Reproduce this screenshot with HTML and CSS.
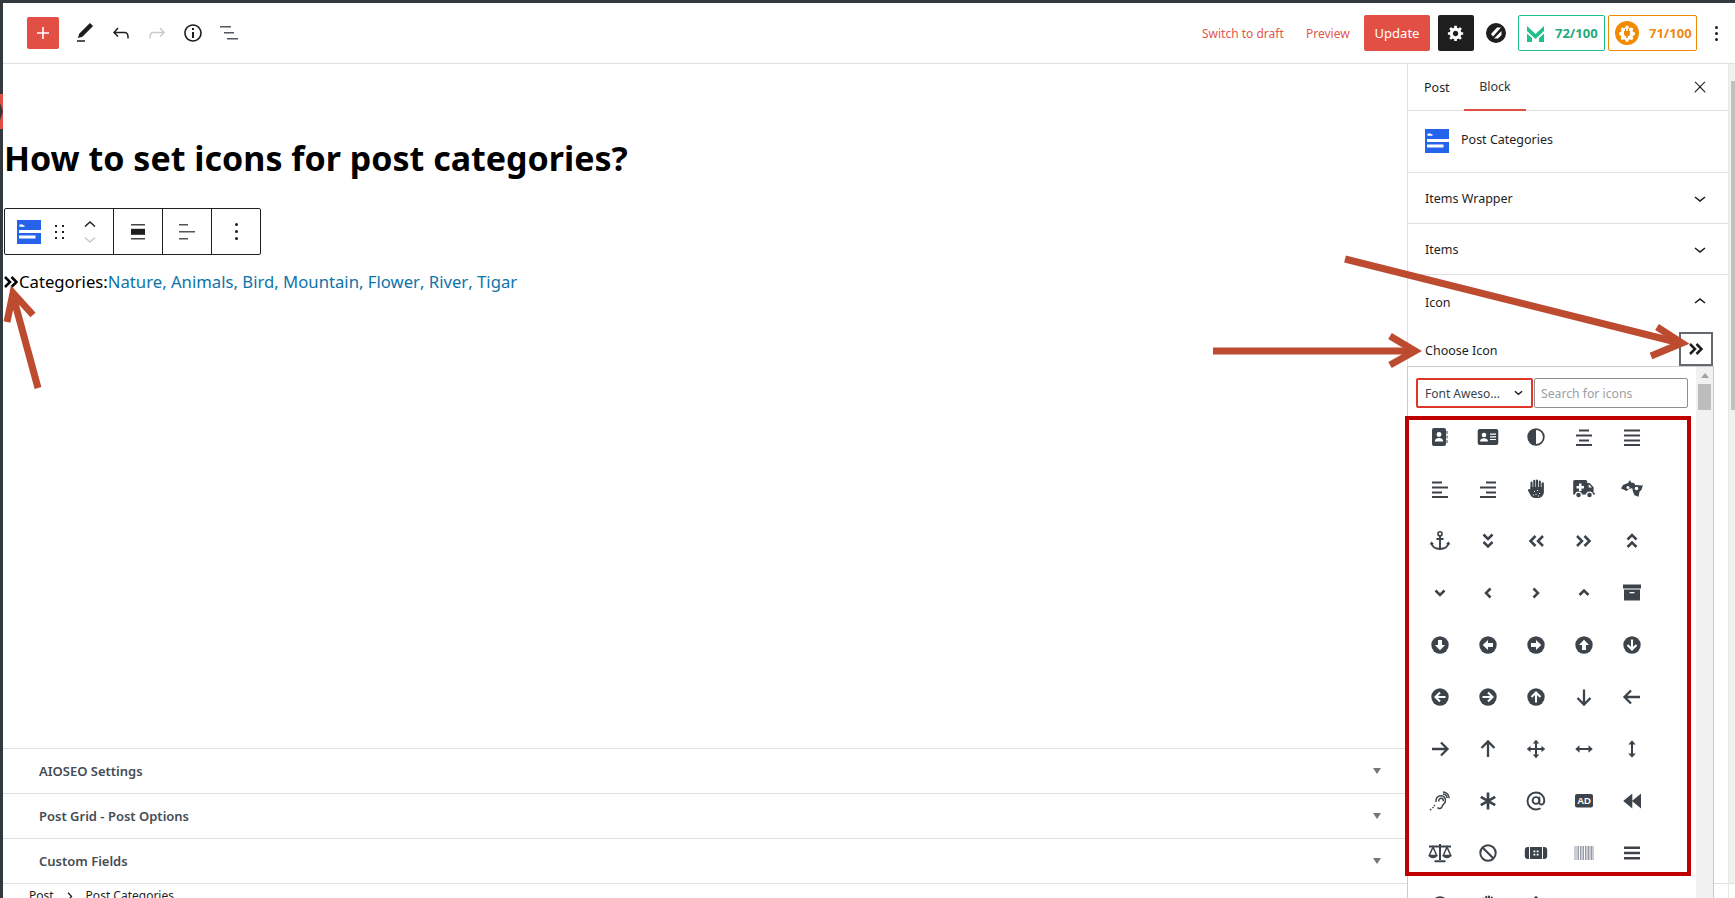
FILE: index.html
```html
<!DOCTYPE html>
<html lang="en">
  <head>
    <meta charset="UTF-8" />
    <title>Edit Post</title>
    <link rel="stylesheet" href="styles.css">
  </head>
  <body>
    <!-- icon sprite for the picker, 1 unit = 1px, box runs -2..22 -->
    <svg class="sprite" xmlns="http://www.w3.org/2000/svg">
      <symbol id="address-book" viewBox="-2 -2 24 24">
        <path d="M4 1h10a2 2 0 0 1 2 2v14a2 2 0 0 1-2 2H4a2 2 0 0 1-2-2V3a2 2 0 0 1 2-2z" />
        <path d="M16.500 4h1v3h-1zM16.500 8.500h1v3h-1zM16.500 13h1v3h-1z" />
        <circle cx="9" cy="7.500" r="2.400" fill="#fff" />
        <path d="M4.800 14.500c0-2.400 1.800-3.500 4.200-3.500s4.200 1.100 4.200 3.500z" fill="#fff" />
      </symbol>
      <symbol id="address-card" viewBox="-2 -2 24 24">
        <rect x="-.3" y="2" width="20.600" height="16" rx="2" />
        <circle cx="6" cy="8" r="2.300" fill="#fff" />
        <path d="M2 14.500c0-2.300 1.800-3.300 4-3.300s4 1 4 3.300z" fill="#fff" />
        <path d="M12 6.500h6v1.200h-6zM12 9.200h6v1.200h-6zM12 11.900h6v1.200h-6z" fill="#fff" />
      </symbol>
      <symbol id="adjust" viewBox="-2 -2 24 24">
        <circle cx="10" cy="10" r="7.800" fill="none" stroke="currentColor" stroke-width="1.800" />
        <path d="M10 2a8 8 0 0 0 0 16z" />
      </symbol>
      <symbol id="align-center" viewBox="-2 -2 24 24">
        <path d="M5 2.500h10v2H5zM2 7.500h16v2H2zM5 12.500h10v2H5zM2 17h16v2H2z" />
      </symbol>
      <symbol id="align-justify" viewBox="-2 -2 24 24">
        <path d="M2 2.500h16v2H2zM2 7.500h16v2H2zM2 12.500h16v2H2zM2 17h16v2H2z" />
      </symbol>
      <symbol id="align-left" viewBox="-2 -2 24 24">
        <path d="M2 2.500h10v2H2zM2 7.500h16v2H2zM2 12.500h10v2H2zM2 17h16v2H2z" />
      </symbol>
      <symbol id="align-right" viewBox="-2 -2 24 24">
        <path d="M8 2.500h10v2H8zM2 7.500h16v2H2zM8 12.500h10v2H8zM2 17h16v2H2z" />
      </symbol>
      <symbol id="allergies" viewBox="-2 -2 24 24">
        <path d="M5.500 3.500v8M8.300 1.800v8M11 1.500v8M13.800 2.500v8" fill="none" stroke="currentColor" stroke-width="2.100" stroke-linecap="round" />
        <path d="M4.500 8h11v-3.500a1.200 1.200 0 0 1 2.400 0V13c0 3.300-2.500 6-5.800 6H9c-2 0-3.400-1-4.300-2.500L2.200 12c-.8-1.500 1-2.700 2-1.500l.3.500z" />
        <path d="M8 12h1v1H8zM11 11h1v1h-1zM13 14h1v1h-1zM9.500 15h1v1h-1zM7 15.500h1v1H7zM12 16.500h1v1h-1z" fill="#fff" />
      </symbol>
      <symbol id="ambulance" viewBox="-2 -2 24 24">
        <path d="M-.8 2.500A1.500 1.500 0 0 1 .7 1h11a1.500 1.500 0 0 1 1.500 1.500V4h2.400l4 4.200v5.800h1.300v1.600H-.8z" />
        <path d="M14.700 5.700h.6l2.600 2.700h-3.200z" fill="#fff" />
        <path d="M5 4.500h2.500V7H10v2.500H7.500V12H5V9.500H2.500V7H5z" fill="#fff" />
        <circle cx="4.500" cy="16" r="2.900" stroke="#fff" stroke-width="1.300" />
        <circle cx="15.500" cy="16" r="2.900" stroke="#fff" stroke-width="1.300" />
      </symbol>
      <symbol id="sign-language" viewBox="-2 -2 24 24">
        <path d="M-1 9.500l2-3.500 5-2 2-3 1 2.500 3 .5 1.500 2.500-3 2.500-3.500 1-2.500 2-3-1.500z" />
        <path d="M10 8.500l3.500-2.500 6.500.5 1-.8-1.500 5-2 2-1 5-4-1.500-1.500-3.500z" />
        <circle cx="6" cy="8.500" r="1.500" fill="#fff" />
        <circle cx="14.500" cy="9.500" r="1.800" fill="#fff" />
      </symbol>
      <symbol id="anchor" viewBox="-2 -2 24 24">
        <circle cx="10" cy="2.800" r="2.100" fill="none" stroke="currentColor" stroke-width="1.600" />
        <path d="M10 5v13M6.500 8h7M1.500 12c.6 3.800 4.200 6 8.500 6s7.900-2.200 8.500-6" fill="none" stroke="currentColor" stroke-width="1.900" />
        <path d="M-.5 13.500l2-3 2.500 2.600zM20.500 13.500l-2-3-2.500 2.600z" />
      </symbol>
      <symbol id="angle-double-down" viewBox="-2 -2 24 24">
        <path d="M5.500 3.500L10 8l4.500-4.500M5.500 11L10 15.500l4.500-4.500" fill="none" stroke="currentColor" stroke-width="2.500" />
      </symbol>
      <symbol id="angle-double-left" viewBox="-2 -2 24 24">
        <path d="M9.500 5L4.500 10l5 5M17 5l-5 5 5 5" fill="none" stroke="currentColor" stroke-width="2.500" />
      </symbol>
      <symbol id="angle-double-right" viewBox="-2 -2 24 24">
        <path d="M3 5l5 5-5 5M10.500 5l5 5-5 5" fill="none" stroke="currentColor" stroke-width="2.500" />
      </symbol>
      <symbol id="angle-double-up" viewBox="-2 -2 24 24">
        <path d="M5.500 8.500L10 4l4.500 4.500M5.500 16L10 11.500l4.500 4.500" fill="none" stroke="currentColor" stroke-width="2.500" />
      </symbol>
      <symbol id="angle-down" viewBox="-2 -2 24 24">
        <path d="M5.500 7.500L10 12l4.500-4.500" fill="none" stroke="currentColor" stroke-width="2.500" />
      </symbol>
      <symbol id="angle-left" viewBox="-2 -2 24 24">
        <path d="M12.500 5.500L8 10l4.500 4.500" fill="none" stroke="currentColor" stroke-width="2.500" />
      </symbol>
      <symbol id="angle-right" viewBox="-2 -2 24 24">
        <path d="M7.500 5.500L12 10l-4.500 4.500" fill="none" stroke="currentColor" stroke-width="2.500" />
      </symbol>
      <symbol id="angle-up" viewBox="-2 -2 24 24">
        <path d="M5.500 12L10 7.500l4.500 4.500" fill="none" stroke="currentColor" stroke-width="2.500" />
      </symbol>
      <symbol id="archive" viewBox="-2 -2 24 24">
        <path d="M1 1.500h18v4H1zM2 6.500h16v11H2z" />
        <path d="M7.500 9h5v1.300h-5z" fill="#fff" />
      </symbol>
      <symbol id="alt-down" viewBox="-2 -2 24 24">
        <circle cx="10" cy="10" r="8.700" />
        <path d="M8 5h4v5h3l-5 5.300L5 10h3z" fill="#fff" />
      </symbol>
      <symbol id="alt-left" viewBox="-2 -2 24 24">
        <circle cx="10" cy="10" r="8.700" />
        <path d="M15 8v4h-5v3l-5.300-5L10 5v3z" fill="#fff" />
      </symbol>
      <symbol id="alt-right" viewBox="-2 -2 24 24">
        <circle cx="10" cy="10" r="8.700" />
        <path d="M5 8v4h5v3l5.300-5L10 5v3z" fill="#fff" />
      </symbol>
      <symbol id="alt-up" viewBox="-2 -2 24 24">
        <circle cx="10" cy="10" r="8.700" />
        <path d="M8 15h4v-5h3l-5-5.300L5 10h3z" fill="#fff" />
      </symbol>
      <symbol id="circle-down" viewBox="-2 -2 24 24">
        <circle cx="10" cy="10" r="8.700" />
        <path d="M10 4.500v10M5.500 10l4.500 4.500 4.500-4.500" fill="none" stroke="#fff" stroke-width="2.100" />
      </symbol>
      <symbol id="circle-left" viewBox="-2 -2 24 24">
        <circle cx="10" cy="10" r="8.700" />
        <path d="M15.500 10h-10M10 5.500L5.500 10l4.500 4.500" fill="none" stroke="#fff" stroke-width="2.100" />
      </symbol>
      <symbol id="circle-right" viewBox="-2 -2 24 24">
        <circle cx="10" cy="10" r="8.700" />
        <path d="M4.500 10h10M10 5.500l4.500 4.500-4.500 4.500" fill="none" stroke="#fff" stroke-width="2.100" />
      </symbol>
      <symbol id="circle-up" viewBox="-2 -2 24 24">
        <circle cx="10" cy="10" r="8.700" />
        <path d="M10 15.500v-10M5.500 10L10 5.500l4.500 4.500" fill="none" stroke="#fff" stroke-width="2.100" />
      </symbol>
      <symbol id="arrow-down" viewBox="-2 -2 24 24">
        <path d="M10 2.500v15M3.500 11l6.500 6.500 6.500-6.500" fill="none" stroke="currentColor" stroke-width="2.300" />
      </symbol>
      <symbol id="arrow-left" viewBox="-2 -2 24 24">
        <path d="M18 10H2.500M9 3.500L2.500 10 9 16.500" fill="none" stroke="currentColor" stroke-width="2.300" />
      </symbol>
      <symbol id="arrow-right" viewBox="-2 -2 24 24">
        <path d="M2 10h15.500M11 3.500l6.500 6.500-6.500 6.500" fill="none" stroke="currentColor" stroke-width="2.300" />
      </symbol>
      <symbol id="arrow-up" viewBox="-2 -2 24 24">
        <path d="M10 18V2.500M3.500 9L10 2.500 16.500 9" fill="none" stroke="currentColor" stroke-width="2.300" />
      </symbol>
      <symbol id="arrows-alt" viewBox="-2 -2 24 24">
        <path d="M10 3v14M3 10h14" stroke="currentColor" stroke-width="2" />
        <path d="M10 .8L13.300 4.500H6.700zM10 19.200L6.700 15.500h6.600zM.8 10l3.700-3.300v6.600zM19.200 10l-3.700 3.300V6.700z" />
      </symbol>
      <symbol id="arrows-h" viewBox="-2 -2 24 24">
        <path d="M4 10h12" stroke="currentColor" stroke-width="2" />
        <path d="M1.200 10L5.500 6.300v7.400zM18.800 10l-4.300 3.700V6.300z" />
      </symbol>
      <symbol id="arrows-v" viewBox="-2 -2 24 24">
        <path d="M10 4v12" stroke="currentColor" stroke-width="2" />
        <path d="M10 1.200l3.700 4.300H6.300zM10 18.800l-3.700-4.300h7.400z" />
      </symbol>
      <symbol id="listening" viewBox="-2 -2 24 24">
        <path d="M6 11c-.5-4 2-6.300 5-6.300s5.300 2.600 4.300 6c-.7 2.200-2.800 2.500-3.300 5-.5 2-3.300 2.300-4.500.8M8.800 10.500c-.3-2 1-3.300 2.400-3.300s2.500 1.300 2 3M13 1c3.300.2 6 2.800 6.200 6.200M13 3c2.300.2 4 2 4.200 4" fill="none" stroke="currentColor" stroke-width="1.500" />
        <path d="M4.500 13.500l1 1-1 1-1-1zM3 15.500l1 1-1 1-1-1zM.5 17.500l1.200 1.200-1 1-1.200-1.200z" />
      </symbol>
      <symbol id="asterisk" viewBox="-2 -2 24 24">
        <path d="M10 1.500v17M2.800 5.800l14.400 8.400M17.200 5.800L2.800 14.200" fill="none" stroke="currentColor" stroke-width="2.700" />
      </symbol>
      <symbol id="at" viewBox="-2 -2 24 24">
        <path d="M13.300 5.800v6c0 2.700 5 2.500 5-2.300 0-4.800-3.800-8-8.300-8a8.500 8.500 0 0 0 0 17c1.800 0 3.200-.4 4.500-1.300" fill="none" stroke="currentColor" stroke-width="1.900" />
        <circle cx="10" cy="9.500" r="3.400" fill="none" stroke="currentColor" stroke-width="1.900" />
      </symbol>
      <symbol id="ad" viewBox="-2 -2 24 24">
        <rect x="1" y="3" width="18" height="13.500" rx="2" />
        <text x="10" y="13.200" text-anchor="middle" class="ad-text">AD</text>
      </symbol>
      <symbol id="backward" viewBox="-2 -2 24 24">
        <path d="M10.300 2.500v15L1.200 10zM19 2.500v15L10 10z" />
      </symbol>
      <symbol id="balance-scale" viewBox="-2 -2 24 24">
        <path d="M10 1v16M4.500 18.200h11M-1 3.500h22" fill="none" stroke="currentColor" stroke-width="2" />
        <path d="M3 4L-.7 12.500h7.400zM17 4l-3.700 8.500h7.400z" fill="none" stroke="currentColor" stroke-width="1.500" />
        <path d="M-1.300 12h8.600c0 2-1.800 3.200-4.300 3.200S-1.300 14-1.300 12zM12.700 12h8.600c0 2-1.800 3.200-4.300 3.200S12.700 14 12.700 12z" />
      </symbol>
      <symbol id="ban" viewBox="-2 -2 24 24">
        <circle cx="10" cy="10" r="7.700" fill="none" stroke="currentColor" stroke-width="2" />
        <path d="M4.500 4.500l11 11" stroke="currentColor" stroke-width="2.100" />
      </symbol>
      <symbol id="band-aid" viewBox="-2 -2 24 24">
        <rect x="-1.200" y="4" width="22.400" height="12" rx="3" />
        <path d="M3 4h1v12H3zM16 4h1v12h-1z" fill="#fff" />
        <path d="M7.500 7.500H9.300v1.800H7.500zM10.700 7.500h1.800v1.800h-1.800zM7.500 10.700H9.300v1.800H7.500zM10.700 10.700h1.800v1.800h-1.800z" fill="#fff" />
      </symbol>
      <symbol id="barcode" viewBox="-2 -2 24 24">
        <path d="M1 3v14M3 3v14M4.500 3v14M6.500 3v14M8 3v14M9.500 3v14M11.500 3v14M13 3v14M14.500 3v14M16 3v14M17.500 3v14M19 3v14" stroke="currentColor" stroke-width=".8" />
      </symbol>
      <symbol id="bars" viewBox="-2 -2 24 24">
        <path d="M2 3.500h16v2.400H2zM2 8.800h16v2.400H2zM2 14.100h16v2.400H2z" />
      </symbol>
      <symbol id="double-right" viewBox="0 0 14 12">
        <path d="M1 1l5 5-5 5M7.500 1l5 5-5 5" fill="none" stroke="currentColor" stroke-width="2.500" />
      </symbol>
      <symbol id="block-icon" viewBox="0 0 24 24">
        <path d="M0 0h24v24H0z" fill="#2563eb" />
        <path d="M2.500 4.500h3l1 .8h1v1.500h-5zM2 10h22v3H2zM2 15.500h16.500v3H2z" fill="#fff" />
      </symbol>
      <symbol id="chev-down" viewBox="0 0 24 24">
        <path d="M17.500 11.600L12 16l-5.500-4.400.9-1.200L12 14l4.500-3.600 1 1.200z" />
      </symbol>
      <symbol id="chev-up" viewBox="0 0 24 24">
        <path d="M6.500 12.400L12 8l5.500 4.400-.9 1.200L12 10l-4.500 3.600-1-1.200z" />
      </symbol>
      <symbol id="caret" viewBox="0 0 8 6">
        <path d="M0 0h8L4 6z" />
      </symbol>
    </svg>

    <div class="page">
      <div class="marker"></div>

      <header class="topbar">
        <button class="btn-add">
          <svg viewBox="0 0 24 24" width="24" height="24"><path d="M18 11.200h-5.200V6h-1.600v5.200H6v1.600h5.200V18h1.600v-5.200H18z" /></svg>
        </button>
        <span class="tool">
          <svg viewBox="0 0 24 24" width="24" height="24"><path d="M20.100 5.100L16.900 2 6.200 12.700l-1.300 4.400 4.500-1.300L20.100 5.100zM4 20.800h8v-1.500H4v1.500z" /></svg>
        </span>
        <span class="tool">
          <svg viewBox="0 0 24 24" width="24" height="24"><path d="M18.300 11.700c-.6-.6-1.400-.9-2.300-.9H6.700l2.900-3.300-1.100-1-4.500 5L8.500 16l1-1-2.700-2.700H16c.5 0 .9.200 1.300.5 1 1 1 3.400 1 4.500v.3h1.500v-.2c0-1.500 0-4.300-1.500-5.700z" /></svg>
        </span>
        <span class="tool tool-off">
          <svg viewBox="0 0 24 24" width="24" height="24"><path d="M15.600 6.500l-1.100 1 2.900 3.300H8c-.9 0-1.700.3-2.300.9-1.400 1.500-1.400 4.200-1.400 5.600v.2h1.500v-.3c0-1.100 0-3.500 1-4.500.3-.3.7-.5 1.300-.5h9.200L14.500 15l1.100 1.100 4.600-4.600-4.600-5z" /></svg>
        </span>
        <span class="tool">
          <svg viewBox="0 0 24 24" width="24" height="24"><path d="M12 3.200c-4.800 0-8.800 3.900-8.800 8.800 0 4.800 3.900 8.800 8.800 8.800 4.800 0 8.800-3.900 8.800-8.800 0-4.800-4-8.800-8.800-8.800zm0 16c-4 0-7.200-3.300-7.200-7.200C4.800 8 8 4.800 12 4.800s7.200 3.300 7.200 7.200c0 4-3.200 7.200-7.200 7.200zM11 17h2v-6h-2v6zm0-8h2V7h-2v2z" /></svg>
        </span>
        <span class="tool">
          <svg viewBox="0 0 24 24" width="24" height="24"><path d="M3 5h11v1.500H3zM7 11h10v1.500H7zM10 17h11v1.500H10z" fill="#50575e" /></svg>
        </span>

        <div class="topbar-right">
          <a class="link-draft">Switch to draft</a>
          <a class="link-preview">Preview</a>
          <button class="btn-update">Update</button>
          <button class="btn-settings">
            <svg viewBox="0 0 20 20" width="18" height="18"><path d="M18 12h-2.180c-.17.7-.44 1.350-.81 1.930l1.540 1.540-2.100 2.100-1.540-1.540c-.58.36-1.230.63-1.910.79V19H8v-2.180c-.68-.16-1.330-.43-1.910-.79l-1.540 1.540-2.120-2.120 1.540-1.540c-.36-.58-.63-1.230-.79-1.910H1V9.030h2.170c.16-.7.44-1.350.8-1.940L2.430 5.550l2.100-2.100 1.540 1.540c.58-.37 1.240-.64 1.930-.81V2h3v2.180c.68.16 1.330.43 1.910.79l1.540-1.540 2.120 2.120-1.540 1.540c.36.59.64 1.240.8 1.940H18V12zm-8.500 1.500c1.660 0 3-1.340 3-3s-1.340-3-3-3-3 1.340-3 3 1.340 3 3 3z" /></svg>
          </button>
          <svg class="logo-z" viewBox="0 0 20 20" width="20" height="20">
            <circle cx="10" cy="10" r="10" fill="#1e1e1e" />
            <path d="M5 11L11 4.500h4L7 13.500zM15.500 8v4L12 15.500H8z" fill="#fff" />
          </svg>
          <div class="score score-green">
            <svg viewBox="0 0 17 17" width="17" height="17">
              <path d="M0 1l8.500 8L17 1v5l-8.500 8L0 6zM0 8.500l5 4.500v4H0zM12 13l5-4.500V17h-5z" fill="#1fc08e" />
            </svg>
            <span>72/100</span>
          </div>
          <div class="score score-orange">
            <svg viewBox="0 0 24 24" width="24" height="24">
              <circle cx="12" cy="12" r="12" fill="#f28a00" />
              <path d="M10.500 4.500h3l.5 2 1.800.8 1.800-1 2 2-1 1.800.8 1.800 2 .5v3l-2 .5-.8 1.800 1 1.800-2 2-1.800-1-1.800.8-.5 2h-3l-.5-2-1.800-.8-1.800 1-2-2 1-1.800-.8-1.800-2-.5v-3l2-.5.8-1.800-1-1.800 2-2 1.800 1 1.800-.8z" transform="translate(12 12) scale(.84) translate(-12 -13)" fill="#fff" />
              <path d="M10 7.500h1.200v2.500h1.600V7.500H14V10h1v3c0 1.200-1 2-2.200 2.200V17h-1.600v-1.800C10 15 9 14.200 9 13v-3h1z" fill="#f28a00" />
            </svg>
            <span>71/100</span>
          </div>
          <span class="kebab"><i></i><i></i><i></i></span>
        </div>
      </header>

      <main class="main">
        <section class="editor">
          <div class="canvas">
            <h1 class="post-title">How to set icons for post categories?</h1>

            <div class="block-bar">
              <div class="bar-group bar-first">
                <svg width="24" height="24"><use href="#block-icon" /></svg>
                <span class="drag"><i></i><i></i><i></i><i></i><i></i><i></i></span>
                <span class="movers">
                  <svg viewBox="0 0 14 8" width="14" height="8"><path d="M2 6.500L7 2l5 4.500" fill="none" stroke="#1e1e1e" stroke-width="1.500" /></svg>
                  <svg viewBox="0 0 14 8" width="14" height="8"><path d="M2 1.500L7 6l5-4.500" fill="none" stroke="#c8c8c8" stroke-width="1.500" /></svg>
                </span>
              </div>
              <div class="bar-group">
                <svg viewBox="0 0 14 16" width="14" height="16"><path d="M0 0h14v1.500H0zM0 14h14v1.500H0z" fill="#444" /><path d="M0 4.800h14v6H0z" fill="#1e1e1e" /></svg>
              </div>
              <div class="bar-group">
                <svg viewBox="0 0 16 16" width="16" height="16"><path d="M0 0h9v1.500H0zM0 7h16v1.500H0zM0 14h9v1.500H0z" fill="#555" /></svg>
              </div>
              <div class="bar-group">
                <span class="kebab kebab-small"><i></i><i></i><i></i></span>
              </div>
            </div>

            <p class="categories">
              <svg class="cat-icon" width="14" height="12"><use href="#double-right" /></svg><span>Categories:</span><a>Nature</a>, <a>Animals</a>, <a>Bird</a>, <a>Mountain</a>, <a>Flower</a>, <a>River</a>, <a>Tigar</a>
            </p>
          </div>

          <div class="meta-row">
            <span>AIOSEO Settings</span>
            <svg width="8" height="6"><use href="#caret" /></svg>
          </div>
          <div class="meta-row">
            <span>Post Grid - Post Options</span>
            <svg width="8" height="6"><use href="#caret" /></svg>
          </div>
          <div class="meta-row">
            <span>Custom Fields</span>
            <svg width="8" height="6"><use href="#caret" /></svg>
          </div>
          <div class="crumbs">
            <span>Post</span>
            <svg viewBox="0 0 8 12" width="6" height="9"><path d="M1.500 1l4.500 5-4.500 5" fill="none" stroke="#1e1e1e" stroke-width="1.800" /></svg>
            <span>Post Categories</span>
          </div>
        </section>

        <aside class="sidebar">
          <div class="tabs">
            <span class="tab">Post</span>
            <span class="tab tab-active">Block</span>
            <svg class="tabs-close" viewBox="0 0 24 24" width="18" height="18"><path d="M13 11.800l6.100-6.300-1-1-6.100 6.200-6.100-6.200-1 1 6.100 6.300-6.500 6.700 1 1 6.500-6.600 6.500 6.600 1-1z" /></svg>
          </div>
          <div class="block-card">
            <svg width="24" height="24"><use href="#block-icon" /></svg>
            <span>Post Categories</span>
          </div>
          <div class="panel-row">
            <span>Items Wrapper</span>
            <svg width="24" height="24"><use href="#chev-down" /></svg>
          </div>
          <div class="panel-row">
            <span>Items</span>
            <svg width="24" height="24"><use href="#chev-down" /></svg>
          </div>
          <div class="panel-open">
            <div class="panel-head">
              <span>Icon</span>
              <svg width="24" height="24"><use href="#chev-up" /></svg>
            </div>
            <div class="choose-row">
              <span class="choose-label">Choose Icon</span>
              <span class="swatch"><svg width="14" height="12"><use href="#double-right" /></svg></span>
            </div>
            <div class="picker">
              <div class="picker-body">
                <div class="picker-search">
                  <div class="fake-select">
                    <span>Font Aweso...</span>
                    <svg viewBox="0 0 10 6" width="9" height="6"><path d="M1 1l4 3.500L9 1" fill="none" stroke="#1e1e1e" stroke-width="1.500" /></svg>
                  </div>
                  <input class="icon-search" type="text" placeholder="Search for icons" />
                </div>
                <div class="icon-grid">
                  <svg class="ico"><use href="#address-book" /></svg>
                  <svg class="ico"><use href="#address-card" /></svg>
                  <svg class="ico"><use href="#adjust" /></svg>
                  <svg class="ico"><use href="#align-center" /></svg>
                  <svg class="ico"><use href="#align-justify" /></svg>

                  <svg class="ico"><use href="#align-left" /></svg>
                  <svg class="ico"><use href="#align-right" /></svg>
                  <svg class="ico"><use href="#allergies" /></svg>
                  <svg class="ico"><use href="#ambulance" /></svg>
                  <svg class="ico"><use href="#sign-language" /></svg>

                  <svg class="ico"><use href="#anchor" /></svg>
                  <svg class="ico"><use href="#angle-double-down" /></svg>
                  <svg class="ico"><use href="#angle-double-left" /></svg>
                  <svg class="ico"><use href="#angle-double-right" /></svg>
                  <svg class="ico"><use href="#angle-double-up" /></svg>

                  <svg class="ico"><use href="#angle-down" /></svg>
                  <svg class="ico"><use href="#angle-left" /></svg>
                  <svg class="ico"><use href="#angle-right" /></svg>
                  <svg class="ico"><use href="#angle-up" /></svg>
                  <svg class="ico"><use href="#archive" /></svg>

                  <svg class="ico"><use href="#alt-down" /></svg>
                  <svg class="ico"><use href="#alt-left" /></svg>
                  <svg class="ico"><use href="#alt-right" /></svg>
                  <svg class="ico"><use href="#alt-up" /></svg>
                  <svg class="ico"><use href="#circle-down" /></svg>

                  <svg class="ico"><use href="#circle-left" /></svg>
                  <svg class="ico"><use href="#circle-right" /></svg>
                  <svg class="ico"><use href="#circle-up" /></svg>
                  <svg class="ico"><use href="#arrow-down" /></svg>
                  <svg class="ico"><use href="#arrow-left" /></svg>

                  <svg class="ico"><use href="#arrow-right" /></svg>
                  <svg class="ico"><use href="#arrow-up" /></svg>
                  <svg class="ico"><use href="#arrows-alt" /></svg>
                  <svg class="ico"><use href="#arrows-h" /></svg>
                  <svg class="ico"><use href="#arrows-v" /></svg>

                  <svg class="ico"><use href="#listening" /></svg>
                  <svg class="ico"><use href="#asterisk" /></svg>
                  <svg class="ico"><use href="#at" /></svg>
                  <svg class="ico"><use href="#ad" /></svg>
                  <svg class="ico"><use href="#backward" /></svg>

                  <svg class="ico"><use href="#balance-scale" /></svg>
                  <svg class="ico"><use href="#ban" /></svg>
                  <svg class="ico"><use href="#band-aid" /></svg>
                  <svg class="ico ico-thin"><use href="#barcode" /></svg>
                  <svg class="ico"><use href="#bars" /></svg>

                  <svg class="ico"><use href="#circle-down" /></svg>
                  <svg class="ico"><use href="#allergies" /></svg>
                  <svg class="ico"><use href="#arrow-up" /></svg>
                </div>
              </div>
              <div class="picker-scroll">
                <i class="scroll-up"></i>
                <i class="scroll-thumb"></i>
              </div>
            </div>
          </div>
        </aside>

        <div class="page-scroll"><i></i></div>
      </main>

      <!-- the red arrows and frame somebody drew on the screenshot -->
      <svg class="notes" viewBox="0 0 1735 898" width="1735" height="898">
        <rect x="1407" y="418" width="282" height="456" fill="none" stroke="#c00000" stroke-width="4" />
        <g fill="none" stroke="#bc4b30" stroke-width="7">
          <path d="M1213 351H1412" />
          <path d="M1390 336L1415 351 1390 365" />
          <path d="M1345 259L1680 343" />
          <path d="M1657 327L1682 343 1651 356" />
          <path d="M38 388L13 296" />
          <path d="M7 322L13 293 33 315" />
        </g>
      </svg>
    </div>
  </body>
</html>
```

FILE: styles.css
```css
* {
  box-sizing: border-box;
}
html,
body {
  margin: 0;
  height: 100%;
  overflow: hidden;
}
body {
  font-family: "Noto Sans", "Open Sans", sans-serif;
  font-size: 13px;
  color: #1e1e1e;
  background: #fff;
}
.sprite {
  display: none;
}
svg {
  display: block;
  fill: currentColor;
}
.ad-text {
  font-family: "Liberation Sans", sans-serif;
  font-size: 9.5px;
  font-weight: bold;
  fill: #fff;
}
.page {
  position: relative;
  width: 1735px;
  height: 898px;
  display: flex;
  flex-direction: column;
  border-top: 3px solid #32393f;
  border-left: 3px solid #32393f;
}
.marker {
  position: absolute;
  left: -3px;
  top: 91px;
  width: 3px;
  height: 35px;
  background: #e24f45;
  clip-path: polygon(0 0, 100% 0, 100% 100%, 0 100%, 0 75%, 100% 50%, 0 25%);
}

/* top bar */
.topbar {
  flex: none;
  height: 61px;
  display: flex;
  align-items: center;
  padding-left: 24px;
  border-bottom: 1px solid #e0e0e0;
}
.topbar button {
  border: none;
  padding: 0;
  font-family: inherit;
  display: flex;
  align-items: center;
  justify-content: center;
}
.btn-add {
  width: 32px;
  height: 32px;
  margin-right: 8px;
  background: #e24f45;
  color: #fff;
  border-radius: 2px;
}
.tool {
  width: 36px;
  height: 36px;
  display: flex;
  align-items: center;
  justify-content: center;
}
.tool-off {
  color: #ccc;
}
.topbar-right {
  margin-left: auto;
  display: flex;
  align-items: center;
}
.link-draft,
.link-preview {
  color: #e2574c;
  font-size: 12px;
}
.link-draft {
  width: 104px;
}
.link-preview {
  width: 58px;
}
.btn-update {
  width: 66px;
  height: 36px;
  background: #e24f45;
  color: #fff;
  font-size: 13px;
  border-radius: 2px;
  margin-right: 8px;
}
.btn-settings {
  width: 36px;
  height: 36px;
  background: #1e1e1e;
  color: #fff;
  border-radius: 2px;
  margin-right: 12px;
}
.logo-z {
  margin-right: 12px;
}
.score {
  height: 36px;
  display: flex;
  align-items: center;
  border: 1px solid;
  border-radius: 2px;
  font-size: 13px;
  font-weight: 700;
}
.score-green {
  width: 87px;
  margin-right: 3px;
  padding-left: 8px;
  gap: 11px;
  color: #1faa7c;
  border-color: #1fbf8c;
}
.score-orange {
  width: 89px;
  padding-left: 6px;
  gap: 10px;
  color: #ee8a12;
  border-color: #f08a00;
}
.kebab {
  width: 38px;
  display: flex;
  flex-direction: column;
  align-items: center;
  gap: 3px;
}
.kebab i {
  width: 3px;
  height: 3px;
  background: #1e1e1e;
  border-radius: 50%;
}
.kebab-small {
  width: auto;
  gap: 4px;
}

/* editor side */
.main {
  flex: 1;
  display: flex;
  min-height: 0;
}
.editor {
  width: 1404px;
  display: flex;
  flex-direction: column;
}
.canvas {
  flex: 1;
  padding-left: 1px;
}
.post-title {
  margin: 72px 0 0;
  font-size: 34px;
  line-height: 44px;
  font-weight: 700;
  color: #000;
}
.block-bar {
  display: flex;
  width: 257px;
  height: 47px;
  margin-top: 28px;
  border: 1px solid #1e1e1e;
  border-radius: 2px;
}
.bar-group {
  flex: 1;
  display: flex;
  align-items: center;
  justify-content: center;
  border-right: 1px solid #1e1e1e;
}
.bar-group:last-child {
  border-right: none;
}
.bar-first {
  flex: none;
  width: 109px;
  justify-content: flex-start;
  padding-left: 12px;
}
.drag {
  display: grid;
  grid-template-columns: 2px 2px;
  gap: 4px 5px;
  margin-left: 14px;
}
.drag i {
  width: 2px;
  height: 2px;
  background: #1e1e1e;
}
.movers {
  display: flex;
  flex-direction: column;
  gap: 8px;
  margin-left: 19px;
}
.categories {
  display: flex;
  align-items: center;
  white-space: pre;
  margin: 15px 0 0;
  font-size: 16.7px;
  line-height: 24px;
  color: #0e74a8;
}
.cat-icon {
  margin-right: 1px;
  color: #000;
}
.categories a {
  color: #0e74a8;
}
.categories span {
  color: #000;
}
.meta-row {
  flex: none;
  height: 45px;
  display: flex;
  align-items: center;
  justify-content: space-between;
  padding: 0 26px 0 36px;
  border-top: 1px solid #e0e0e0;
  font-weight: 600;
  color: #444c54;
}
.meta-row svg {
  color: #72777c;
}
.crumbs {
  flex: none;
  height: 15px;
  display: flex;
  align-items: flex-start;
  gap: 13px;
  padding: 4px 0 0 26px;
  border-top: 1px solid #e0e0e0;
  font-size: 12px;
  line-height: 16px;
}
.crumbs svg {
  margin-top: 4px;
}

/* right sidebar */
.sidebar {
  position: relative;
  flex: none;
  width: 322px;
  font-size: 12.5px;
  border-left: 1px solid #e0e0e0;
  border-right: 1px solid #e8e8e8;
}
.sidebar::after {
  content: "";
  position: absolute;
  left: 0;
  right: 0;
  bottom: 14px;
  height: 1px;
  background: #e0e0e0;
}
.tabs {
  height: 47px;
  display: flex;
  align-items: center;
  border-bottom: 1px solid #e0e0e0;
}
.tab {
  height: 46px;
  display: flex;
  align-items: center;
  justify-content: center;
  margin-top: 1px;
}
.tab:first-child {
  margin-left: 16px;
  width: 40px;
  justify-content: flex-start;
}
.tab-active {
  width: 62px;
  border-bottom: 2px solid #e24f45;
  color: #333;
}
.tabs-close {
  margin-left: auto;
  margin-right: 19px;
}
.block-card {
  height: 62px;
  display: flex;
  gap: 12px;
  padding: 18px 0 0 17px;
  border-bottom: 1px solid #e0e0e0;
}
.block-card span {
  line-height: 22px;
}
.panel-row {
  height: 51px;
  display: flex;
  align-items: center;
  justify-content: space-between;
  padding: 0 16px 0 17px;
  border-bottom: 1px solid #e0e0e0;
}
.panel-head {
  height: 54px;
  display: flex;
  align-items: center;
  justify-content: space-between;
  padding: 0 16px 0 17px;
}
.choose-row {
  height: 37px;
  display: flex;
  align-items: center;
  justify-content: space-between;
  padding-left: 17px;
  margin-right: 15px;
}
.choose-label {
  padding-top: 6px;
}
.swatch {
  width: 34px;
  height: 34px;
  margin-top: 3px;
  display: flex;
  align-items: center;
  justify-content: center;
  border: 2px solid #646970;
}
.picker {
  position: relative;
  z-index: 1;
  display: flex;
  width: 307px;
  height: 540px;
  margin-left: -1px;
  background: #fff;
  border: 1px solid #ccc;
  border-bottom: none;
}
.picker-body {
  flex: 1;
  padding-top: 11px;
}
.picker-search {
  display: flex;
  padding-left: 8px;
  height: 30px;
}
.fake-select {
  width: 117px;
  display: flex;
  align-items: center;
  justify-content: space-between;
  padding: 0 8px 0 7px;
  border: 2px solid #e0352b;
  border-radius: 2px;
  font-size: 12px;
  color: #3c434a;
}
.icon-search {
  width: 154px;
  margin-left: 1px;
  padding: 0 6px;
  border: 1px solid #8c8f94;
  border-radius: 2px;
  font-family: inherit;
  font-size: 12.2px;
}
.icon-search::placeholder {
  color: #9aa0a6;
}
.icon-grid {
  display: grid;
  grid-template-columns: repeat(5, 48px);
  grid-auto-rows: 52px;
  margin: 3px 0 0 8px;
  color: #3c434a;
}
.ico {
  width: 24px;
  height: 24px;
  align-self: center;
  justify-self: center;
}
.ico-thin {
  color: #7b8391;
}
.picker-scroll {
  width: 17px;
  background: #f1f1f1;
  position: relative;
}
.scroll-up {
  display: block;
  width: 0;
  margin: 6px auto 0;
  border-left: 4px solid transparent;
  border-right: 4px solid transparent;
  border-bottom: 5px solid #a3a3a3;
}
.scroll-thumb {
  display: block;
  width: 13px;
  height: 26px;
  margin: 6px auto 0;
  background: #bdbdbd;
}
.page-scroll {
  flex: none;
  width: 6px;
  height: 820px;
  padding: 17px 0 0 2px;
  background: #f1f1f1;
  border-bottom: 1px solid #e0e0e0;
}
.page-scroll i {
  display: block;
  height: 329px;
  background: #c1c1c1;
}
.notes {
  position: absolute;
  z-index: 2;
  left: -3px;
  top: -3px;
  pointer-events: none;
  fill: none;
}
```
